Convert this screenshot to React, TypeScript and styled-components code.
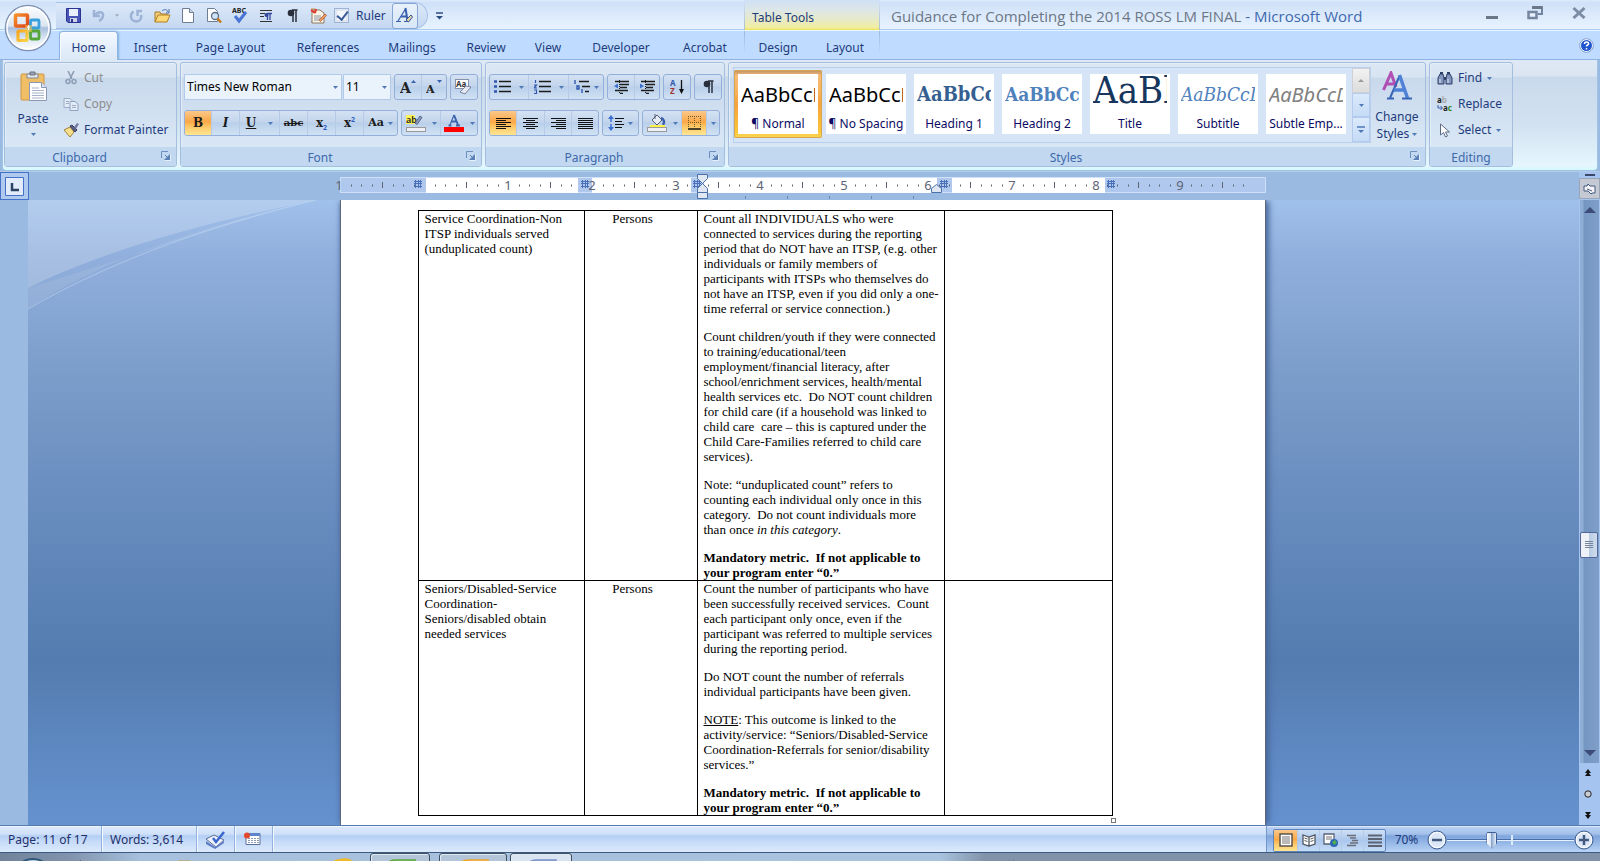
import React from "react";
import styled, { createGlobalStyle, css } from "styled-components";

const UI = `"Noto Sans", "Open Sans", sans-serif`;
const SERIF = `"Liberation Serif", "Times New Roman", serif`;

const Global = createGlobalStyle`
  * { box-sizing: border-box; }
  body { margin: 0; font-family: ${UI}; font-size: 12px; line-height: 16px; color: #1e3c7c; background: #9bbae1; }
  button, select, input { font: inherit; color: inherit; margin: 0; }
  button { border: 0; padding: 0; background: none; }
`;

const Window = styled.div`
  display: flex;
  flex-direction: column;
  height: 100vh;
  overflow: hidden;
  position: relative;
`;

/* ---------- title bar ---------- */
const TitleBar = styled.header`
  flex: none;
  display: flex;
  height: 31px;
  background: linear-gradient(#dceafb 0, #cfe1f8 3px, #dbe9fb 14px, #e6f2fe 28px);
  border-bottom: 1px solid #e8f5ff;
  box-shadow: inset 0 -1px #a9cdf1;
`;
const TitleLeft = styled.div`
  flex: none;
  display: flex;
  align-items: center;
  width: 744px;
  padding: 2px 0 1px 56px;
`;
const QuickAccess = styled.div`
  display: flex;
  align-items: center;
  height: 27px;
  width: 372px;
  padding-left: 9px;
  border: 1px solid #a7c2e8;
  border-left: 0;
  border-radius: 0 14px 14px 0;
  background: linear-gradient(#dbe8f8, #c5d8f1);
`;
const QuickButton = styled.button<{ $w: number; $boxed?: boolean }>`
  flex: none;
  display: flex;
  align-items: center;
  justify-content: center;
  width: ${(p) => p.$w}px;
  height: 26px;
  ${(p) =>
    p.$boxed &&
    css`
      border: 1px solid #86a5d3;
      border-radius: 3px;
      background: linear-gradient(#e9f1fb, #d8e7f8);
      margin-left: 6px;
    `}
`;
const RulerToggle = styled.label`
  display: flex;
  align-items: center;
  gap: 7px;
  margin-left: 7px;
`;
const CheckBox = styled.input`
  appearance: none;
  width: 15px;
  height: 15px;
  border: 1px solid #9cb4d6;
  background: #f3f7fc;
  box-shadow: inset 0 0 0 2px #dfe6ef;
  &:checked::after {
    content: "";
    display: block;
    width: 5px;
    height: 9px;
    margin: 0 0 0 4px;
    border: solid #3c5b98;
    border-width: 0 2px 2px 0;
    transform: rotate(38deg);
  }
`;
const ContextTitle = styled.div`
  flex: none;
  width: 136px;
  padding: 10px 7px 0;
  border: solid;
  border-width: 0 1px;
  border-image: linear-gradient(#d3e3f8, #a9bccb) 1;
  background: linear-gradient(#d0e1f7, #dde7e6 35%, #e7eac8 65%, #f1eda0 92%, #efe25a);
`;
const DocTitle = styled.h1`
  flex: 1;
  margin: 0;
  padding: 6px 0 0 11px;
  font-family: "Open Sans", "Noto Sans", sans-serif;
  font-size: 15px;
  line-height: 20px;
  font-weight: 400;
  white-space: nowrap;
  color: #6c7786;
  span { color: #4069b0; }
`;
const WindowButtons = styled.div`
  display: flex;
  align-items: flex-start;
  gap: 29px;
  padding: 5px 14px 0 0;
`;

/* ---------- tab strip ---------- */
const TabStrip = styled.nav`
  flex: none;
  display: flex;
  height: 29px;
  padding-left: 59px;
  background: #bfdbff;
  border-bottom: 1px solid #8db2e3;
`;
const Tab = styled.button<{ $w: number; $active?: boolean }>`
  flex: none;
  width: ${(p) => p.$w}px;
  height: 29px;
  padding-top: 4px;
  text-align: center;
  white-space: nowrap;
  ${(p) =>
    p.$active &&
    css`
      border: 1px solid #8db2e3;
      border-bottom: 0;
      border-radius: 4px 4px 0 0;
      padding-top: 3px;
      background: linear-gradient(#f4f9ff, #e4eefb 60%, #dce8f6);
      box-shadow: 1px 0 2px #7fb4d8, inset 1px 1px #f8fcff;
    `}
`;
const ContextTabs = styled.div`
  display: flex;
  width: 136px;
  margin-left: 6px;
  border: solid;
  border-width: 0 1px;
  border-image: linear-gradient(#9db7d6, #bfdbff 80%) 1;
`;
const HelpButton = styled.button`
  margin-left: auto;
  padding-right: 6px;
  display: flex;
  align-items: center;
`;

/* ---------- ribbon ---------- */
const Ribbon = styled.section`
  flex: none;
  display: flex;
  gap: 3px;
  height: 111px;
  margin: 0 2px;
  padding: 2px 1px 3px;
  border: solid #9fc3e6;
  border-width: 0 1px 1px;
  border-radius: 0 0 4px 4px;
  background: linear-gradient(#dfe9f5 0, #dbe5f2 16px, #c9d9ec 17px, #d3e2f1 60%, #e5f6fe 96%, #d3fbfd);
`;
const Group = styled.section<{ $w: number }>`
  flex: none;
  display: flex;
  flex-direction: column;
  width: ${(p) => p.$w}px;
  height: 105px;
  border: 1px solid #a3bfdd;
  border-radius: 3px;
  box-shadow: inset 1px 1px #e5eef8;
  background: linear-gradient(#dde7f4 0, #d8e4f2 14px, #c9d9ec 15px, #d9e7f5 84px);
`;
const GroupBody = styled.div`
  flex: 1;
  display: flex;
  min-height: 0;
`;
const GroupLabel = styled.div<{ $launch: boolean }>`
  flex: none;
  position: relative;
  height: 19px;
  padding-right: ${(p) => (p.$launch ? 22 : 0)}px;
  line-height: 21px;
  text-align: center;
  color: #3f69aa;
  background: #c1d8f0;
  border-radius: 0 0 3px 3px;
`;
const Launcher = styled.button`
  position: absolute;
  right: 5px;
  top: 4px;
  display: flex;
`;
const BigButton = styled.button<{ $w: number }>`
  flex: none;
  display: flex;
  flex-direction: column;
  align-items: center;
  width: ${(p) => p.$w}px;
  padding-top: 8px;
  line-height: 17px;
  > svg:first-child { margin-bottom: 8px; }
  > svg:last-child { margin-top: 6px; }
  span svg { vertical-align: middle; }
`;
const CommandList = styled.div<{ $inset?: number }>`
  display: flex;
  flex-direction: column;
  padding: 2px 0 0 ${(p) => p.$inset ?? 0}px;
`;
const Command = styled.button`
  display: flex;
  align-items: center;
  gap: 5px;
  height: 26px;
  white-space: nowrap;
  &:disabled { color: #8d8d8d; }
`;
const Rows = styled.div`
  display: flex;
  flex-direction: column;
  gap: 10px;
  padding: 11px 3px 0;
`;
const Row = styled.div`
  display: flex;
  gap: 3px;
  height: 26px;
`;
const ComboPair = styled.div`
  display: flex;
  gap: 1px;
`;
const Segment = styled.div`
  display: flex;
  border: 1px solid #94b0da;
  border-radius: 3px;
  overflow: hidden;
  background: linear-gradient(#d4e2f3, #c3d5ec 45%, #b9cfea 50%, #d0e1f4);
`;
const Tool = styled.button<{ $w: number; $on?: boolean; $gap?: number }>`
  flex: none;
  display: flex;
  align-items: center;
  justify-content: center;
  gap: ${(p) => p.$gap ?? 4}px;
  width: ${(p) => p.$w}px;
  & + & { border-left: 1px solid #b4cae6; }
  ${(p) => p.$on && css`background: linear-gradient(#fbc88b, #fba846 45%, #fdc766 65%, #ffe693);`}
`;
const Combo = styled.label<{ $w: number }>`
  position: relative;
  width: ${(p) => p.$w}px;
  select {
    appearance: none;
    width: 100%;
    height: 26px;
    padding: 0 12px 0 2px;
    border: 1px solid #b3cbea;
    border-radius: 0;
    background: #eaf2fb;
    color: #000;
    outline: 0;
  }
  svg { position: absolute; right: 4px; top: 12px; pointer-events: none; }
`;

/* ---------- styles gallery ---------- */
const Gallery = styled.div`
  display: flex;
  height: 76px;
  margin: 4px 0 0 4px;
  border: 1px solid #b9d0ed;
  background: #d5e5f7;
`;
const StyleTile = styled.button<{ $on?: boolean }>`
  flex: none;
  width: 88px;
  height: 68px;
  margin-top: 2px;
  padding: 4px;
  border-radius: 2px;
  ${(p) =>
    p.$on &&
    css`
      background: linear-gradient(#b98a66 0, #f6bb78 8%, #f9b45c 30%, #f7a23c 50%, #fbc637 90%, #fbd558);
      box-shadow: inset 0 0 0 1px #d9a650;
    `}
`;
const TileInner = styled.span`
  display: flex;
  flex-direction: column;
  height: 60px;
  background: #fff;
  color: #0b0b63;
  overflow: hidden;
  white-space: nowrap;
`;
const Preview = styled.span<{ $size: number; $color: string; $serif?: boolean; $bold?: boolean; $italic?: boolean }>`
  height: 41px;
  margin: 0 3px;
  overflow: hidden;
  text-align: left;
  line-height: ${(p) => (p.$size > 24 ? 32 : 41)}px;
  font-family: ${(p) => (p.$serif ? `"DejaVu Serif Condensed", "DejaVu Serif", serif` : UI)};
  font-size: ${(p) => p.$size}px;
  font-weight: ${(p) => (p.$bold ? 700 : 400)};
  font-style: ${(p) => (p.$italic ? "italic" : "normal")};
  color: ${(p) => p.$color};
`;
const TileName = styled.span`
  line-height: 17px;
  text-align: center;
`;
const GalleryScroll = styled.div`
  display: flex;
  flex-direction: column;
  width: 18px;
  margin-left: 2px;
`;
const ScrollStep = styled.button<{ $off?: boolean }>`
  flex: 1;
  display: flex;
  align-items: center;
  justify-content: center;
  border: 1px solid ${(p) => (p.$off ? "#cdd0d4" : "#b4cbed")};
  background: ${(p) => (p.$off ? "linear-gradient(#f2f2f2, #dcdcdc)" : "linear-gradient(#dbe9fb, #c6dbf6)")};
`;

/* ---------- ruler and work area ---------- */
const RulerRow = styled.div`
  flex: none;
  display: flex;
  height: 29px;
  background: #9bbae1;
  border-top: 1px solid #b5cbe8;
  position: relative;
  z-index: 1;
`;
const TabSelector = styled.button`
  width: 29px;
  height: 28px;
  border: 1px solid #4472c8;
  background: #b0c9ef;
  display: flex;
  align-items: center;
  justify-content: center;
`;
const RulerTrack = styled.div`
  flex: 1;
  display: flex;
  justify-content: center;
  padding-right: 3px;
  svg { flex: none; overflow: visible; }
`;
const RulerCorner = styled.div`
  width: 21px;
  background: #a6c4f0;
  display: flex;
  flex-direction: column;
  align-items: center;
  gap: 2px;
  padding-top: 2px;
`;
const SplitHandle = styled.div`
  width: 10px;
  height: 2px;
  background: #3b4668;
`;
const RulerButton = styled.button`
  width: 21px;
  height: 21px;
  border: 1px solid #9aa5b8;
  background: #c4c9d3;
  display: flex;
  align-items: center;
  justify-content: center;
`;
const Work = styled.main`
  flex: 1;
  display: flex;
  min-height: 0;
`;
const SideRuler = styled.div`
  flex: none;
  width: 28px;
  background: #9bbae1;
`;
const Desk = styled.div`
  flex: 1;
  display: flex;
  justify-content: center;
  padding-right: 2px;
  position: relative;
  overflow: hidden;
  background: linear-gradient(#a0c1eb 0, #91afdc 9%, #7b9dca 28%, #6b8fc0 45%, #547cb0 74%, #6592cf 100%);
`;
const Swoosh = styled.svg`
  position: absolute;
  left: 0;
  top: 0;
`;
const Page = styled.article`
  flex: none;
  position: relative;
  width: 926px;
  padding: 10px 0 0 77px;
  border: solid #5e6677;
  border-width: 0 1px;
  background: #fff;
  box-shadow: 4px 0 6px -1px #46669a, -2px 0 5px -2px #4d6d9e;
`;
const DocTable = styled.table`
  border-collapse: collapse;
  table-layout: fixed;
  width: 694px;
  font: 13px/15px ${SERIF};
  color: #000;
  td {
    vertical-align: top;
    padding: 0 0 0 6px;
    border: 1px solid #000;
    white-space: nowrap;
  }
  td:nth-child(2) { text-align: center; padding: 0 16px 0 0; }
`;
const Para = styled.p<{ $bold?: boolean }>`
  margin: 0;
  font-weight: ${(p) => (p.$bold ? 700 : 400)};
  & + & { margin-top: 13px; }
`;
const TableHandle = styled.div`
  width: 5px;
  height: 5px;
  margin: 2px 0 0 693px;
  border: 1px solid #777;
`;

/* ---------- vertical scroll bar ---------- */
const ScrollBar = styled.aside`
  flex: none;
  display: flex;
  flex-direction: column;
  width: 21px;
  background: #a6c4f0;
`;
const ScrollTrack = styled.div`
  flex: 1;
  display: flex;
  flex-direction: column;
  align-items: center;
  justify-content: space-between;
  padding: 7px 0;
  margin: 0 1px 0 1px;
  position: relative;
  background: linear-gradient(90deg, #8faed6 0, #8faed6 3px, #7496c2 4px, #7f9fc9);
`;
const ScrollThumb = styled.div`
  position: absolute;
  top: 59%;
  left: 0;
  width: 18px;
  height: 26px;
  border: 1px solid #55689a;
  border-radius: 2px;
  background: linear-gradient(90deg, #eef2f8 50%, #b9cce4 52%, #d0dcec);
  display: flex;
  align-items: center;
  justify-content: center;
`;
const BrowseButtons = styled.div`
  display: flex;
  flex-direction: column;
  align-items: center;
  height: 62px;
  padding: 6px 3px 0 0;
  gap: 13px;
  button { display: flex; }
`;

/* ---------- status bar ---------- */
const StatusBar = styled.footer`
  flex: none;
  display: flex;
  height: 28px;
  border-top: 1px solid #567db0;
  border-bottom: 1px solid #3f5a80;
  background: linear-gradient(#fff 0, #dce9fb 1px, #cfe0f9 8px, #b3cff4 10px, #c7dcf8 16px, #dbe9fc);
`;
const StatusItem = styled.div<{ $w: number }>`
  flex: none;
  display: flex;
  align-items: center;
  width: ${(p) => p.$w}px;
  padding: 2px 0 0 8px;
  border-right: 1px solid #92b1de;
  box-shadow: 1px 0 #f4f9ff;
  color: #1f2f6b;
  white-space: nowrap;
`;
const StatusRight = styled.div`
  display: flex;
  align-items: center;
  width: 334px;
  margin-left: auto;
  padding: 2px 0 0 6px;
  border-left: 1px solid #7398cb;
  background: linear-gradient(#fff 0, #b9d1f3 1px, #a4c1ea 8px, #7fa5dc 10px, #92b5e6 16px, #b8d3f5);
`;
const ViewButtons = styled.div`
  display: flex;
  height: 23px;
  border: 1px solid #5d86bf;
  border-radius: 2px;
  background: linear-gradient(#cfe0f6, #aac7ee 50%, #c6dcf6);
`;
const ZoomPercent = styled.button`
  width: 41px;
  height: 24px;
`;
const ZoomSlider = styled.input`
  appearance: none;
  width: 127px;
  height: 22px;
  background:
    linear-gradient(#dceafd, #dceafd) 64px 6px / 2px 10px no-repeat,
    linear-gradient(#4a6fa8, #4a6fa8) 0 10px / 100% 1px no-repeat,
    linear-gradient(#e6f1ff, #e6f1ff) 0 11px / 100% 1px no-repeat;
  &::-webkit-slider-thumb {
    appearance: none;
    width: 11px;
    height: 17px;
    border-radius: 2px 2px 6px 6px;
    border: 1px solid #3e5d92;
    background: linear-gradient(90deg, #fff, #d5e2f3 45%, #8aa6cd 50%, #e6effa);
    clip-path: polygon(0 0, 100% 0, 100% 68%, 50% 100%, 0 68%);
  }
`;
const RoundButton = styled.button`
  display: flex;
`;

/* ---------- taskbar ---------- */
const TaskBar = styled.div`
  flex: none;
  display: flex;
  height: 8px;
  overflow: hidden;
  background: linear-gradient(90deg, #71839b 0, #8294ad 70px, #a6c0dd 140px, #a9c2de 940px, #8193a9 985px, #8092a9);
`;
const TaskSlot = styled.div<{ $w: number }>`
  flex: none;
  width: ${(p) => p.$w}px;
`;
const TaskButton = styled.button<{ $w: number; $pale?: boolean }>`
  flex: none;
  width: ${(p) => p.$w}px;
  height: 12px;
  margin-right: 3px;
  border: 1px solid #3f5063;
  border-radius: 3px 3px 0 0;
  box-shadow: inset 1px 1px #dfeaf5;
  background: ${(p) => (p.$pale ? "#d8e4f2" : "#b3c6d9")};
`;

/* ---------- drawings ---------- */
const Svg = ({ w, h, children }: { w: number; h: number; children: React.ReactNode }) => (
  <svg width={w} height={h} viewBox={`0 0 ${w} ${h}`} fill="none" aria-hidden="true">
    {children}
  </svg>
);
const Caret = ({ c = "#4f7ab8" }: { c?: string }) => (
  <Svg w={5} h={3}><path d="M0 0h5L2.500 3z" fill={c} /></Svg>
);
const LauncherIcon = () => (
  <Svg w={10} h={10}><path d="M.5 7V.5H7" stroke="#6d8fc0" /><path d="M9 3v6H3z" fill="#5a80b5" /><path d="M4 4l4 4" stroke="#5a80b5" /><path d="M9.500 3.500v6h-6" stroke="#fff" opacity=".6" /></Svg>
);
const Glyph = styled.span<{ $size?: number; $bold?: boolean }>`
  font-family: "DejaVu Serif", serif;
  font-size: ${(p) => p.$size ?? 12}px;
  font-weight: ${(p) => (p.$bold ? 700 : 400)};
  color: #1b1b1b;
  line-height: 20px;
  sub, sup { font-size: 7px; line-height: 0; color: #2d5fc4; font-family: ${UI}; }
`;

const OrbButton = styled.button`
  position: absolute;
  left: 3px;
  top: 3px;
  z-index: 2;
`;
const Orb = () => (
  <OrbButton aria-label="Office Button">
    <Svg w={50} h={50}>
      <defs>
        <linearGradient id="orb" x2="0" y2="1">
          <stop stopColor="#fdfeff" /><stop offset=".45" stopColor="#dde6f1" /><stop offset=".5" stopColor="#a9bfdd" /><stop offset=".75" stopColor="#dfeaf6" /><stop offset="1" stopColor="#fff" />
        </linearGradient>
        <linearGradient id="orbRed" x2="1" y2="1"><stop stopColor="#f5912b" /><stop offset="1" stopColor="#df4518" /></linearGradient>
        <linearGradient id="orbYel" x2="1" y2="1"><stop stopColor="#f7a61d" /><stop offset="1" stopColor="#fbd24a" /></linearGradient>
      </defs>
      <circle cx="25" cy="25" r="22.500" fill="url(#orb)" stroke="#7f92b4" strokeWidth="1.500" />
      <circle cx="25" cy="25" r="21" stroke="#fff" strokeWidth="1.500" />
      <rect x="12.500" y="12" width="12" height="11" rx="1" stroke="url(#orbRed)" strokeWidth="3.500" />
      <rect x="27.500" y="17" width="8.500" height="8" rx="1" stroke="#39a0dc" strokeWidth="2.800" />
      <rect x="15" y="28" width="9" height="9.500" rx="1" stroke="url(#orbYel)" strokeWidth="3.200" />
      <rect x="27.500" y="28" width="8.500" height="8" rx="1" stroke="#55a63a" strokeWidth="2.800" />
      <path d="M22 22h7v7h-7z" fill="#f3c54a" opacity=".55" />
      <path d="M24 24h3M25.500 22v5" stroke="#fff" />
    </Svg>
  </OrbButton>
);

const SaveIcon = () => (
  <Svg w={15} h={15}><path d="M.5.500h14v14H2L.5 13z" fill="#4a55b8" stroke="#2b3590" /><path d="M3 1h9v7H3z" fill="#e9f0fb" /><path d="M4 10h7v4H4z" fill="#cdd3e2" /><path d="M5 11h2v3H5z" fill="#2b3590" /></Svg>
);
const UndoIcon = () => (
  <Svg w={13} h={14}><path d="M2 1v6h6" stroke="#9db3d6" strokeWidth="2.500" /><path d="M3 6.500c3-5 9-4 8 .5-.5 3-2 4-4 5" stroke="#9db3d6" strokeWidth="2.500" /></Svg>
);
const RedoIcon = () => (
  <Svg w={14} h={14}><path d="M4.500 2.500C1 5 1 10 5 12c5 1.500 8-2 7-6" stroke="#9db3d6" strokeWidth="2.500" /><path d="M13 2H8.500v5" stroke="#9db3d6" strokeWidth="2.500" /></Svg>
);
const OpenIcon = () => (
  <Svg w={17} h={15}><path d="M1 14V4h5l1 2h6v3" fill="#f0cf7a" stroke="#a87828" /><path d="M1 14l3-7h12l-3 7z" fill="#ffd978" stroke="#b17f25" /><path d="M8 3c2-2 5-2 6 1M15 1v4h-3" stroke="#4d6fa8" /></Svg>
);
const PageIcon = () => (
  <Svg w={12} h={15}><path d="M.5.500h7l4 4v10H.5z" fill="#fff" stroke="#6f7d94" /><path d="M7.500.500v4h4" fill="#cfd9ea" stroke="#6f7d94" /></Svg>
);
const PreviewIcon = () => (
  <Svg w={15} h={15}><path d="M.5.500h7l3 3v10H.5z" fill="#fff" stroke="#6f7d94" /><circle cx="8" cy="8" r="3.500" fill="#cfe4f8" stroke="#5d6c84" strokeWidth="1.300" /><path d="M10.500 10.500l3.500 4" stroke="#c77b1c" strokeWidth="2.500" /></Svg>
);
const SpellIcon = () => (
  <Svg w={16} h={17}><text x="0" y="6" fontSize="7" fontWeight="700" fill="#222" fontFamily="Noto Sans">ABC</text><path d="M3 9l4 5 7-9" stroke="#4a74d6" strokeWidth="3" /></Svg>
);
const ParaMarksIcon = () => (
  <Svg w={14} h={14}><path d="M1 1.500h12M1 4.500h5M1 7.500h4M1 12.500h12" stroke="#333" /><path d="M8.500 4v7M11 4v7M13 4.500H8.500" stroke="#34489c" strokeWidth="1.300" /><circle cx="7.500" cy="6" r="2" fill="#34489c" /></Svg>
);
const Pilcrow = () => (
  <Svg w={11} h={14}><path d="M5 1h5.500M6 1v12M9 1v12" stroke="#2a2f3c" strokeWidth="1.500" /><circle cx="4" cy="4" r="3.300" fill="#2a2f3c" /></Svg>
);
const MarkupIcon = () => (
  <Svg w={17} h={16}><path d="M1 1h4v13H1" stroke="#c98d35" /><path d="M2 2h8l4 3v10H2z" fill="#fbf3e4" stroke="#8b7a64" /><path d="M1 2l4 3M6 1l-1 4" stroke="#e0352b" strokeWidth="2" /><path d="M4 8h7M4 10h7M4 12h5" stroke="#8c95a8" /><path d="M9 12l6-6 1.500 1.500-6 6z" fill="#f0a05c" stroke="#9c3a26" strokeWidth=".6" /></Svg>
);
const StyleBrushIcon = () => (
  <Svg w={17} h={17}><path d="M2 14L9.500 2" stroke="#3a5fae" strokeWidth="1.300" /><path d="M9.500 1l2 13M5 9.500h6" stroke="#3a5fae" strokeWidth="2" /><path d="M0 14.500h5M8 14.500h5" stroke="#3a5fae" strokeWidth="1.200" /><path d="M10 13l5-5 1.500 2-4 5z" fill="#e4d9a2" stroke="#34529b" /></Svg>
);
const CustomizeIcon = () => (
  <Svg w={7} h={8}><path d="M0 1h7" stroke="#2f4c80" strokeWidth="1.500" /><path d="M0 4h7L3.500 7.500z" fill="#2f4c80" /></Svg>
);
const MinimizeIcon = () => <Svg w={12} h={14}><path d="M0 12.500h12" stroke="#6b7686" strokeWidth="3" /></Svg>;
const RestoreIcon = () => (
  <Svg w={16} h={15}><path d="M5 2h10v7h-4" stroke="#75859f" strokeWidth="2" /><path d="M5 2.500h10" stroke="#6b7686" strokeWidth="3" /><path d="M1.500 7h8v6h-8z" fill="#e6effb" stroke="#75859f" strokeWidth="2.500" /></Svg>
);
const CloseIcon = () => <Svg w={14} h={14}><path d="M1.500 3l11 10M12.500 3l-11 10" stroke="#7d8ca5" strokeWidth="3" /></Svg>;
const HelpIcon = () => (
  <Svg w={15} h={15}><circle cx="7.500" cy="7.500" r="6.800" fill="#fff" stroke="#7d9cd6" /><circle cx="7.500" cy="7.500" r="5.500" fill="#1f55cc" /><path d="M5.500 6c0-3 4.500-2.500 4 0-.3 1-2 1-2 2.500M7.500 10v1.500" stroke="#fff" strokeWidth="1.600" /></Svg>
);

const PasteIcon = () => (
  <Svg w={27} h={31}><rect x="1" y="3" width="23" height="26" rx="1" fill="#efbe66" stroke="#cf9643" /><path d="M7 3h11v4H7z" fill="#e5e8ee" stroke="#7d8799" /><path d="M10 1h5v3h-5z" fill="#9ba3b2" stroke="#687286" /><path d="M9.500 11.500h12l5 5v13h-17z" fill="#fff" stroke="#8a98b5" /><path d="M21.500 11.500v5h5" fill="#d9e3f3" stroke="#8a98b5" /><path d="M12 17h7M12 19.500h12M12 22h12M12 24.500h12M12 27h12" stroke="#a7b3c9" /></Svg>
);
const CutIcon = () => (
  <Svg w={16} h={14}><path d="M5 0l4 8M11 0L7 8" stroke="#8e9db5" strokeWidth="1.600" /><circle cx="5" cy="10.500" r="2" stroke="#8e9db5" strokeWidth="1.500" /><circle cx="11" cy="10.500" r="2" stroke="#8e9db5" strokeWidth="1.500" /></Svg>
);
const CopyIcon = () => (
  <Svg w={16} h={13}><path d="M1 .5h6l2 2v7H1z" fill="#e3ebf6" stroke="#9aacc8" /><path d="M7 3.500h5l3 2.500v6.500H7z" fill="#e3ebf6" stroke="#8fa2c2" /><path d="M9 7.500h4M9 9.500h4M3 3.500h3M3 5.500h3" stroke="#9aacc8" /></Svg>
);
const PainterIcon = () => (
  <Svg w={16} h={15}><path d="M1 7l6-3 4 5-4 5z" fill="#f5df8c" stroke="#a08239" /><path d="M7 3l2-1 5 5-2 2z" fill="#5b5f85" stroke="#3a3e63" /><path d="M11 4l3-4 2 1-3 5z" fill="#777ca6" /></Svg>
);
const GrowIcon = ({ up }: { up?: boolean }) => (
  <Svg w={16} h={16}><text x="0" y="14" fontSize={up ? 14 : 11} fontWeight="700" fill="#222" fontFamily="DejaVu Serif">A</text><path d={up ? "M11 4h5l-2.500-3z" : "M11 1h5l-2.500 3z"} fill="#3a62ae" /></Svg>
);
const ClearIcon = () => (
  <Svg w={18} h={17}><rect x=".5" y=".5" width="13" height="9" fill="#fff" stroke="#8792a8" /><text x="1" y="8" fontSize="8" fontWeight="700" fill="#333" fontFamily="Noto Sans">Aa</text><path d="M5 13l6-6 5 1-6 7z" fill="#e6e9f2" stroke="#7a84a0" /></Svg>
);
const HighlightIcon = () => (
  <Svg w={20} h={18}><path d="M0 1h9v9H0z" fill="#fbf35a" /><text x="0" y="9" fontSize="9" fontWeight="600" fill="#222" fontFamily="Noto Sans">ab</text><path d="M9 9l5-7 2 1.500-5 7z" fill="#8d9cbd" stroke="#54658c" /><rect x=".5" y="13.500" width="19" height="4" fill="#eef1f5" stroke="#9a9a9a" /></Svg>
);
const FontColorIcon = () => (
  <Svg w={20} h={18}><path d="M6 11l4-10" stroke="#3d66ac" strokeWidth="1.200" /><path d="M10 1l4 10M7.500 7.500h5M4.500 11.500h3M12 11.500h4" stroke="#3d66ac" strokeWidth="2" /><path d="M0 13h20v5H0z" fill="#f00" /></Svg>
);
const ListIcon = ({ kind }: { kind: "bullet" | "number" | "multi" }) => (
  <Svg w={17} h={14}>
    {kind === "multi" ? (
      <><path d="M6 1.500h10M9 6.500h8M12 11.500h4" stroke="#1c1c1c" strokeWidth="1.300" /><path d="M2 0v4M4 6h2v3H4zM9 9v4" stroke="#3158ae" strokeWidth="1.400" /></>
    ) : (
      <><path d="M5 1.500h12M5 6.500h12M5 11.500h12" stroke="#1c1c1c" strokeWidth="1.500" /><path d={kind === "bullet" ? "M0 1.500h3M0 6.500h3M0 11.500h3" : "M1.500 0v3M0 5h2.500L0 8h3M0 10h2.500v3.500H0"} stroke="#3158ae" strokeWidth={kind === "bullet" ? 2.500 : 1.200} /></>
    )}
  </Svg>
);
const IndentIcon = ({ out }: { out?: boolean }) => (
  <Svg w={16} h={14}><path d="M2 1.500h14M7 4.500h9M7 7.500h7M2 10.500h13M7 13.500h3" stroke="#1c1c1c" strokeWidth="1.300" /><path d="M6.500 0v14" stroke="#1c1c1c" strokeDasharray="1 1" /><path d={out ? "M5 3.500v5L1 6z" : "M1 3.500v5L5 6z"} fill="#3b6fd0" /></Svg>
);
const SortIcon = () => (
  <Svg w={15} h={16}><text x="0" y="7" fontSize="8" fontWeight="700" fill="#3158ae" fontFamily="Noto Sans">A</text><text x="0" y="15" fontSize="8" fontWeight="700" fill="#a33434" fontFamily="Noto Sans">Z</text><path d="M11.500 1v12" stroke="#111" strokeWidth="1.300" /><path d="M9 10h5l-2.500 5z" fill="#111" /></Svg>
);
const AlignIcon = ({ lines }: { lines: number[][] }) => (
  <Svg w={15} h={11}>{lines.map(([a, b], i) => <path key={i} d={`M${a} ${i * 2 + 0.5}H${b}`} stroke="#111" />)}</Svg>
);
const LEFT = [[0, 15], [0, 10], [0, 15], [0, 10], [0, 15], [0, 10]];
const CENTER = [[0, 15], [3, 12], [0, 15], [3, 12], [0, 15], [3, 12]];
const RIGHT = [[0, 15], [5, 15], [0, 15], [5, 15], [0, 15], [5, 15]];
const FULL = [[0, 15], [0, 15], [0, 15], [0, 15], [0, 15], [0, 15]];
const SpacingIcon = () => (
  <Svg w={16} h={16}><path d="M7 3.500h9M7 6.500h7M7 9.500h9M7 12.500h7" stroke="#111" strokeWidth="1.200" /><path d="M3 3v4M3 9v4" stroke="#3b6fd0" strokeWidth="1.500" /><path d="M0 4h6L3 0zM0 12h6l-3 4z" fill="#3b6fd0" /></Svg>
);
const ShadeIcon = () => (
  <Svg w={20} h={18}><path d="M5 6l5-5 5 5-5 5z" fill="#e8edf5" stroke="#555e72" /><path d="M8 0v5" stroke="#555e72" /><path d="M14 4c3 1 4 4 2 7" stroke="#3b5fae" strokeWidth="2.500" /><path d="M3 12h15" stroke="#fff04a" strokeWidth="2" /><rect x=".5" y="13.500" width="19" height="4" fill="#eef1f5" stroke="#9a9a9a" /></Svg>
);
const BorderIcon = () => (
  <Svg w={13} h={14}><path d="M.5 0v12M6.500 0v12M12.500 0v12M0 .5h13M0 6.500h13" stroke="#6b5a2c" strokeDasharray="1 1" /><path d="M0 13h13" stroke="#111" strokeWidth="1.600" /></Svg>
);
const ChangeStylesIcon = () => (
  <Svg w={30} h={29}><path d="M1.500 19L9 2l5 14M4.500 13h8" stroke="#b14fb5" strokeWidth="3" /><path d="M8 27L17.500 5" stroke="#3764b4" strokeWidth="2" /><path d="M17.500 4l8 23M12 19h11" stroke="#4f82d6" strokeWidth="3.500" /><path d="M5 27.500h7M20 27.500h10" stroke="#3764b4" strokeWidth="2" /></Svg>
);
const FindIcon = () => (
  <Svg w={16} h={14}><path d="M1 7l2-4h3l1 4v6H1zM15 7l-2-4h-3L9 7v6h6z" fill="#8195bd" stroke="#2c3d66" /><path d="M3 1h3v2H3zM10 1h3v2h-3zM7 6h2v3H7z" fill="#2c3d66" /><path d="M3 8v4M11 8v4" stroke="#e4ecf8" /></Svg>
);
const ReplaceIcon = () => (
  <Svg w={16} h={16}><text x="0" y="7" fontSize="8" fontWeight="700" fill="#222" fontFamily="Noto Sans">a<tspan fill="#aaa">b</tspan></text><text x="6" y="15" fontSize="8" fontWeight="700" fill="#222" fontFamily="Noto Sans">a<tspan fill="#2c8a2c">c</tspan></text><path d="M1 9v3h4M3.500 10l2 2-2 2" stroke="#3b5fae" /></Svg>
);
const SelectIcon = () => (
  <Svg w={16} h={15}><path d="M3.500 1v11l3-2.500 2 4.500 2-1-2-4h4z" fill="#fff" stroke="#5c6b87" /></Svg>
);

const TICKS = Array.from({ length: 87 }, (_, i) => i + 1);
const ColumnMark = ({ x }: { x: number }) => (
  <path d={`M${x} 10.500h8M${x} 12.500h8M${x} 15.500h8M${x + 1.5} 9v8M${x + 4.5} 9v8M${x + 6.5} 9v8`} stroke="#4a70b8" />
);
/* 84 units to the inch, zero at the left margin */
const RulerScale = () => (
  <svg width={926} height={28} viewBox="0 1 926 28" fill="none" fontFamily={UI} fontSize="13" aria-hidden="true">
    <path d="M.5 6.500h925v15H.5z" fill="#b0c8ed" stroke="#cfe0f7" />
    <path d="M86 7h152v15H86zM252 7h99v15h-99zM364 7h233v15H364zM612 7h153v15H612z" fill="#fff" />
    {TICKS.map((i) => {
      const x = Math.round(i * 10.5);
      if (i % 8 === 0) {
        const n = Math.abs(i / 8 - 1);
        return n ? <text key={i} x={x} y="19" textAnchor="middle" fill="#5d6474">{n}</text> : null;
      }
      if (x > 905 || Math.abs(x - 82) < 6 || Math.abs(x - 242) < 6 || Math.abs(x - 357) < 8) return null;
      return <path key={i} d={i % 4 === 0 ? `M${x + 0.5} 11v6` : `M${x + 0.5} 13.500v2`} stroke="#5d6474" />;
    })}
    <text x="-1" y="19" textAnchor="middle" fill="#5d6474">1</text>
    <ColumnMark x={74} />
    <ColumnMark x={241} />
    <ColumnMark x={353} />
    <ColumnMark x={600} />
    <ColumnMark x={767} />
    <path d="M405.500 25v3M447.500 25v3M489.500 25v3M531.500 25v3M573.500 25v3" stroke="#6f87ad" />
    <path d="M357.500 3.500h10v4l-5 5 5 5v10h-10v-10l5-5-5-5zM357.500 21.500h10" fill="#dfe7f2" stroke="#4c70a8" />
    <path d="M591.500 21.500v-4l5-4 5 4v4z" fill="#dfe7f2" stroke="#4c70a8" />
  </svg>
);

/* ---------- data ---------- */
const TABS: [string, number][] = [
  ["Insert", 65], ["Page Layout", 95], ["References", 100], ["Mailings", 68], ["Review", 80], ["View", 44], ["Developer", 102], ["Acrobat", 66],
];
const STYLES = [
  { name: "¶ Normal", text: "AaBbCcDd", size: 20, color: "#000", on: true },
  { name: "¶ No Spacing", text: "AaBbCcDd", size: 20, color: "#000" },
  { name: "Heading 1", text: "AaBbCcD", size: 20, color: "#365f91", serif: true, bold: true },
  { name: "Heading 2", text: "AaBbCc", size: 19, color: "#4f81bd", serif: true, bold: true },
  { name: "Title", text: "AaBb", size: 38, color: "#17365d", serif: true },
  { name: "Subtitle", text: "AaBbCcD", size: 19, color: "#4f81bd", serif: true, italic: true },
  { name: "Subtle Emp...", text: "AaBbCcDd", size: 20, color: "#808080", italic: true },
];
const lines = (text: string) =>
  text.split("\n").map((l, i) => <React.Fragment key={i}>{i > 0 && <br />}{l}</React.Fragment>);

const LabelBar = ({ text, launch = true }: { text: string; launch?: boolean }) => (
  <GroupLabel $launch={launch}>{text}{launch && <Launcher aria-label={`${text} dialog`}><LauncherIcon /></Launcher>}</GroupLabel>
);

export default function App() {
  return (
    <Window>
      <Global />
      <Orb />
      <TitleBar>
        <TitleLeft>
          <QuickAccess>
            <QuickButton $w={16} aria-label="Save"><SaveIcon /></QuickButton>
            <QuickButton $w={34} aria-label="Undo"><UndoIcon /></QuickButton>
            <QuickButton $w={4} aria-label="Undo list"><Caret c="#a0a8b4" /></QuickButton>
            <QuickButton $w={34} aria-label="Redo"><RedoIcon /></QuickButton>
            <QuickButton $w={18} aria-label="Open"><OpenIcon /></QuickButton>
            <QuickButton $w={34} aria-label="New"><PageIcon /></QuickButton>
            <QuickButton $w={18} aria-label="Print Preview"><PreviewIcon /></QuickButton>
            <QuickButton $w={34} aria-label="Spelling"><SpellIcon /></QuickButton>
            <QuickButton $w={18} aria-label="Paragraph marks"><ParaMarksIcon /></QuickButton>
            <QuickButton $w={34} aria-label="Show all"><Pilcrow /></QuickButton>
            <QuickButton $w={18} aria-label="Markup"><MarkupIcon /></QuickButton>
            <RulerToggle><CheckBox type="checkbox" defaultChecked />Ruler</RulerToggle>
            <QuickButton $w={26} $boxed aria-label="Styles"><StyleBrushIcon /></QuickButton>
          </QuickAccess>
          <QuickButton $w={22} aria-label="Customize toolbar"><CustomizeIcon /></QuickButton>
        </TitleLeft>
        <ContextTitle>Table Tools</ContextTitle>
        <DocTitle>Guidance for Completing the 2014 ROSS LM FINAL <span>- Microsoft Word</span></DocTitle>
        <WindowButtons>
          <button aria-label="Minimize"><MinimizeIcon /></button>
          <button aria-label="Restore"><RestoreIcon /></button>
          <button aria-label="Close"><CloseIcon /></button>
        </WindowButtons>
      </TitleBar>

      <TabStrip>
        <Tab $w={59} $active>Home</Tab>
        {TABS.map(([t, w]) => <Tab key={t} $w={w}>{t}</Tab>)}
        <ContextTabs>
          <Tab $w={66}>Design</Tab>
          <Tab $w={68}>Layout</Tab>
        </ContextTabs>
        <HelpButton aria-label="Help"><HelpIcon /></HelpButton>
      </TabStrip>

      <Ribbon>
        <Group $w={173}>
          <GroupBody>
            <BigButton $w={56}><PasteIcon />Paste<Caret /></BigButton>
            <CommandList $inset={2}>
              <Command disabled><CutIcon />Cut</Command>
              <Command disabled><CopyIcon />Copy</Command>
              <Command><PainterIcon />Format Painter</Command>
            </CommandList>
          </GroupBody>
          <LabelBar text="Clipboard" />
        </Group>

        <Group $w={302}>
          <GroupBody>
            <Rows>
              <Row>
                <ComboPair>
                  <Combo $w={158}><select aria-label="Font"><option>Times New Roman</option></select><Caret /></Combo>
                  <Combo $w={48}><select aria-label="Font size"><option>11</option></select><Caret /></Combo>
                </ComboPair>
                <Segment><Tool $w={26} aria-label="Grow font"><GrowIcon up /></Tool><Tool $w={25} aria-label="Shrink font"><GrowIcon /></Tool></Segment>
                <Segment><Tool $w={26} aria-label="Clear formatting"><ClearIcon /></Tool></Segment>
              </Row>
              <Row>
                <Segment>
                  <Tool $w={26} $on><Glyph $bold>B</Glyph></Tool>
                  <Tool $w={28}><Glyph $bold><i>I</i></Glyph></Tool>
                  <Tool $w={40} $gap={12}><Glyph $bold><u>U</u></Glyph><Caret /></Tool>
                  <Tool $w={28}><Glyph $size={10} $bold><s>abc</s></Glyph></Tool>
                  <Tool $w={28}><Glyph $bold>x<sub>2</sub></Glyph></Tool>
                  <Tool $w={28}><Glyph $bold>x<sup>2</sup></Glyph></Tool>
                  <Tool $w={34}><Glyph $size={11} $bold>Aa</Glyph><Caret /></Tool>
                </Segment>
                <Segment>
                  <Tool $w={38} $gap={6} aria-label="Highlight"><HighlightIcon /><Caret /></Tool>
                  <Tool $w={37} $gap={6} aria-label="Font color"><FontColorIcon /><Caret /></Tool>
                </Segment>
              </Row>
            </Rows>
          </GroupBody>
          <LabelBar text="Font" />
        </Group>

        <Group $w={240}>
          <GroupBody>
            <Rows>
              <Row>
                <Segment>
                  <Tool $w={38} $gap={8} aria-label="Bullets"><ListIcon kind="bullet" /><Caret /></Tool>
                  <Tool $w={40} $gap={8} aria-label="Numbering"><ListIcon kind="number" /><Caret /></Tool>
                  <Tool $w={35} aria-label="Multilevel list"><ListIcon kind="multi" /><Caret /></Tool>
                </Segment>
                <Segment><Tool $w={26} aria-label="Decrease indent"><IndentIcon out /></Tool><Tool $w={25} aria-label="Increase indent"><IndentIcon /></Tool></Segment>
                <Segment><Tool $w={26} aria-label="Sort"><SortIcon /></Tool></Segment>
                <Segment><Tool $w={26} aria-label="Show marks"><Pilcrow /></Tool></Segment>
              </Row>
              <Row>
                <Segment>
                  <Tool $w={26} $on aria-label="Align left"><AlignIcon lines={LEFT} /></Tool>
                  <Tool $w={28} aria-label="Center"><AlignIcon lines={CENTER} /></Tool>
                  <Tool $w={27} aria-label="Align right"><AlignIcon lines={RIGHT} /></Tool>
                  <Tool $w={27} aria-label="Justify"><AlignIcon lines={FULL} /></Tool>
                </Segment>
                <Segment><Tool $w={35} aria-label="Line spacing"><SpacingIcon /><Caret /></Tool></Segment>
                <Segment>
                  <Tool $w={38} $gap={6} aria-label="Shading"><ShadeIcon /><Caret /></Tool>
                  <Tool $w={25} $on aria-label="Borders"><BorderIcon /></Tool>
                  <Tool $w={13} aria-label="Border list"><Caret /></Tool>
                </Segment>
              </Row>
            </Rows>
          </GroupBody>
          <LabelBar text="Paragraph" />
        </Group>

        <Group $w={698}>
          <GroupBody>
            <Gallery>
              {STYLES.map((s) => (
                <StyleTile key={s.name} $on={s.on}>
                  <TileInner>
                    <Preview $size={s.size} $color={s.color} $serif={s.serif} $bold={s.bold} $italic={s.italic}>{s.text}</Preview>
                    <TileName>{s.name}</TileName>
                  </TileInner>
                </StyleTile>
              ))}
              <GalleryScroll>
                <ScrollStep $off aria-label="Previous row"><Svg w={6} h={3}><path d="M0 3h6L3 0z" fill="#9b9b9b" /></Svg></ScrollStep>
                <ScrollStep aria-label="Next row"><Caret /></ScrollStep>
                <ScrollStep aria-label="More"><Svg w={8} h={8}><path d="M0 1h8" stroke="#4f7ab8" strokeWidth="1.500" /><path d="M1 4h6L4 7z" fill="#4f7ab8" /></Svg></ScrollStep>
              </GalleryScroll>
            </Gallery>
            <BigButton $w={52}><ChangeStylesIcon /><span>Change</span><span>Styles <Caret /></span></BigButton>
          </GroupBody>
          <LabelBar text="Styles" />
        </Group>

        <Group $w={84}>
          <GroupBody>
            <CommandList $inset={7}>
              <Command><FindIcon />Find <Caret /></Command>
              <Command><ReplaceIcon />Replace</Command>
              <Command><SelectIcon />Select <Caret /></Command>
            </CommandList>
          </GroupBody>
          <LabelBar text="Editing" launch={false} />
        </Group>
      </Ribbon>

      <RulerRow>
        <TabSelector aria-label="Tab type"><Svg w={19} h={19}><path d="M.5.500h18v18H.5z" fill="#e1ebf9" stroke="#4472c8" /><path d="M7 6v7h7" stroke="#2c4466" strokeWidth="2.500" /></Svg></TabSelector>
        <RulerTrack><RulerScale /></RulerTrack>
        <RulerCorner>
          <SplitHandle />
          <RulerButton aria-label="View ruler"><Svg w={13} h={12}><path d="M1 3h3l1-2 2 2h5v7h-3l-1 1-3-3H1z" fill="#f6f2f8" stroke="#3f5a80" /><path d="M4 6l5 2" stroke="#3f5a80" /></Svg></RulerButton>
        </RulerCorner>
      </RulerRow>

      <Work>
        <SideRuler />
        <Desk>
          <Swoosh width="300" height="120" viewBox="0 0 300 120" aria-hidden="true">
            <path d="M0 0h288C190 20 80 48 0 88z" fill="#fff" opacity=".2" />
            <path d="M0 88C80 64 190 26 288 0 170 26 70 62 0 109z" fill="#dbe8fa" opacity=".12" />
            <path d="M0 109C70 68 170 28 288 0" fill="none" stroke="#c8ddf6" opacity=".5" />
          </Swoosh>
          <Page>
            <DocTable>
              <colgroup><col width="166" /><col width="113" /><col width="247" /><col width="168" /></colgroup>
              <tbody>
                <tr>
                  <td>{lines("Service Coordination-Non\nITSP individuals served\n(unduplicated count)")}</td>
                  <td>Persons</td>
                  <td>
                    <Para>{lines("Count all INDIVIDUALS who were\nconnected to services during the reporting\nperiod that do NOT have an ITSP, (e.g. other\nindividuals or family members of\nparticipants with ITSPs who themselves do\nnot have an ITSP, even if you did only a one-\ntime referral or service connection.)")}</Para>
                    <Para>{lines("Count children/youth if they were connected\nto training/educational/teen\nemployment/financial literacy, after\nschool/enrichment services, health/mental\nhealth services etc.\u00a0 Do NOT count children\nfor child care (if a household was linked to\nchild care\u00a0 care – this is captured under the\nChild Care-Families referred to child care\nservices).")}</Para>
                    <Para>{lines("Note: “unduplicated count” refers to\ncounting each individual only once in this\ncategory.\u00a0 Do not count individuals more\nthan once ")}<i>in this category</i>.</Para>
                    <Para $bold>{lines("Mandatory metric.\u00a0 If not applicable to\nyour program enter “0.”")}</Para>
                  </td>
                  <td />
                </tr>
                <tr>
                  <td>{lines("Seniors/Disabled-Service\nCoordination-\nSeniors/disabled obtain\nneeded services")}</td>
                  <td>Persons</td>
                  <td>
                    <Para>{lines("Count the number of participants who have\nbeen successfully received services.\u00a0 Count\neach participant only once, even if the\nparticipant was referred to multiple services\nduring the reporting period.")}</Para>
                    <Para>{lines("Do NOT count the number of referrals\nindividual participants have been given.")}</Para>
                    <Para><u>NOTE</u>{lines(": This outcome is linked to the\nactivity/service: “Seniors/Disabled-Service\nCoordination-Referrals for senior/disability\nservices.”")}</Para>
                    <Para $bold>{lines("Mandatory metric.\u00a0 If not applicable to\nyour program enter “0.”")}</Para>
                  </td>
                  <td />
                </tr>
              </tbody>
            </DocTable>
            <TableHandle />
          </Page>
        </Desk>
        <ScrollBar>
          <ScrollTrack>
            <Svg w={12} h={6}><path d="M0 6h12L6 0z" fill="#3c4b77" /></Svg>
            <ScrollThumb><Svg w={8} h={8}><path d="M0 .5h8M0 2.500h8M0 4.500h8M0 6.500h8" stroke="#77849b" /></Svg></ScrollThumb>
            <Svg w={12} h={6}><path d="M0 0h12L6 6z" fill="#3c4b77" /></Svg>
          </ScrollTrack>
          <BrowseButtons>
            <button aria-label="Previous"><Svg w={6} h={8}><path d="M0 4h6L3 0zM0 7h6L3 3z" fill="#111" /></Svg></button>
            <button aria-label="Browse object"><Svg w={8} h={8}><circle cx="4" cy="4" r="3.200" fill="#c9ccd4" stroke="#222" /></Svg></button>
            <button aria-label="Next"><Svg w={6} h={8}><path d="M0 1h6L3 5zM0 4h6L3 8z" fill="#111" /></Svg></button>
          </BrowseButtons>
        </ScrollBar>
      </Work>

      <StatusBar>
        <StatusItem $w={102}>Page: 11 of 17</StatusItem>
        <StatusItem $w={95}>Words: 3,614</StatusItem>
        <StatusItem $w={38}><Svg w={21} h={20}><path d="M1 9l8-4 10 5-8 7z" fill="#eef3fb" stroke="#5b6c96" /><path d="M1 11l9 6 9-6v2l-9 6-9-5z" fill="#5f7dc4" /><path d="M8 8l3 4 8-10" stroke="#3a67cf" strokeWidth="2.500" /></Svg></StatusItem>
        <StatusItem $w={38}><Svg w={18} h={16}><path d="M3 1.500h14v11H3z" fill="#fff" stroke="#5a6f9e" /><path d="M3 1h14v3H3z" fill="#5d84cf" /><path d="M5 6.500h11M5 8.500h11M5 10.500h11" stroke="#8f9cb8" strokeDasharray="2 1" /><circle cx="4" cy="3.500" r="3" fill="#e2492c" /></Svg></StatusItem>
        <StatusRight>
          <ViewButtons>
            <Tool $w={23} $on aria-label="Print layout"><Svg w={14} h={14}><path d="M1 1h12v12H1z" fill="#fff" stroke="#5b564c" strokeWidth="1.500" /><path d="M3 4h8M3 6h8M3 8h8M3 10h8" stroke="#777" /></Svg></Tool>
            <Tool $w={22} aria-label="Reading"><Svg w={14} h={14}><path d="M1 2l6 2 6-2v9l-6 2-6-2zM7 4v9" fill="#fff" stroke="#4d535f" strokeWidth="1.300" /><path d="M2.500 5l3 1M2.500 7.500l3 1M8.500 6l3-1M8.500 8.500l3-1" stroke="#555" /></Svg></Tool>
            <Tool $w={22} aria-label="Web layout"><Svg w={15} h={14}><path d="M1 1h10v10H1z" fill="#fff" stroke="#5b6374" strokeWidth="1.300" /><path d="M3 4h6M3 6h6" stroke="#777" /><circle cx="11" cy="10" r="4" fill="#2e66b8" /><path d="M9 9l3-2 2 3-3 2z" fill="#4fae4a" /></Svg></Tool>
            <Tool $w={22} aria-label="Outline"><Svg w={13} h={13}><path d="M1 1.500h9M4 4h6M6 6.500h6M4 9h8M1 11.500h9" stroke="#6b6f7a" strokeWidth="1.300" /></Svg></Tool>
            <Tool $w={22} aria-label="Draft"><Svg w={14} h={13}><path d="M0 1.500h14M0 5h14M0 8.500h14M0 12h14" stroke="#5f6471" strokeWidth="2" /></Svg></Tool>
          </ViewButtons>
          <ZoomPercent>70%</ZoomPercent>
          <RoundButton aria-label="Zoom out"><Svg w={20} h={20}><circle cx="10" cy="10" r="9" fill="#dbe7f6" stroke="#3d5b90" /><circle cx="10" cy="10" r="7.500" stroke="#fff" /><path d="M5 10h10" stroke="#44597f" strokeWidth="2.500" /></Svg></RoundButton>
          <ZoomSlider type="range" aria-label="Zoom" min={0} max={100} defaultValue={34} />
          <RoundButton aria-label="Zoom in"><Svg w={20} h={20}><circle cx="10" cy="10" r="9" fill="#dbe7f6" stroke="#3d5b90" /><circle cx="10" cy="10" r="7.500" stroke="#fff" /><path d="M5 10h10M10 5v10" stroke="#44597f" strokeWidth="2.500" /></Svg></RoundButton>
        </StatusRight>
      </StatusBar>

      <TaskBar>
        <TaskSlot $w={370}>
          <Svg w={370} h={9}>
            <ellipse cx="33" cy="17" rx="17" ry="14" fill="#b8d2e6" stroke="#2f5577" strokeWidth="2" />
            <path d="M70 9l2-3M75 8l1-3M79 7l2-2" stroke="#222" strokeWidth="2" />
            <rect x="106" y="5" width="35" height="8" rx="2" fill="#fff" />
            <path d="M178 9V5h12l3 2h18v3" fill="#f2dc86" stroke="#c49a3a" /><path d="M180 9V5h4v4z" fill="#4da24e" />
            <path d="M328 12c3-8 20-10 23-6" stroke="#efbb2a" strokeWidth="3" /><path d="M330 12c2-5 12-6 16-3" stroke="#4b9be0" strokeWidth="3" />
          </Svg>
        </TaskSlot>
        <TaskButton $w={60} aria-label="Excel"><Svg w={34} h={9}><path d="M1 11C4 4 8 3 14 3h18v8" fill="#b9cfb5" stroke="#57a839" strokeWidth="1.500" /></Svg></TaskButton>
        <TaskSlot $w={6} />
        <TaskButton $w={68} aria-label="Outlook"><Svg w={34} h={9}><path d="M1 11C4 4 8 3 14 3h18v8" fill="#f6d9a0" stroke="#efa326" strokeWidth="1.500" /></Svg></TaskButton>
        <TaskButton $w={62} $pale aria-label="Word"><Svg w={34} h={9}><path d="M1 11C4 4 8 3 14 3h18v8" fill="#a9b7dd" stroke="#7b92cd" strokeWidth="1.500" /></Svg></TaskButton>
        <TaskSlot $w={425} />
        <TaskSlot $w={584}><Svg w={560} h={9}><path d="M5 9l1-3M9 8l1-3M13 7l1-2" stroke="#222" strokeWidth="2" /><path d="M118 7h3M123 7h2" stroke="#fff" strokeWidth="2" /></Svg></TaskSlot>
      </TaskBar>
    </Window>
  );
}
